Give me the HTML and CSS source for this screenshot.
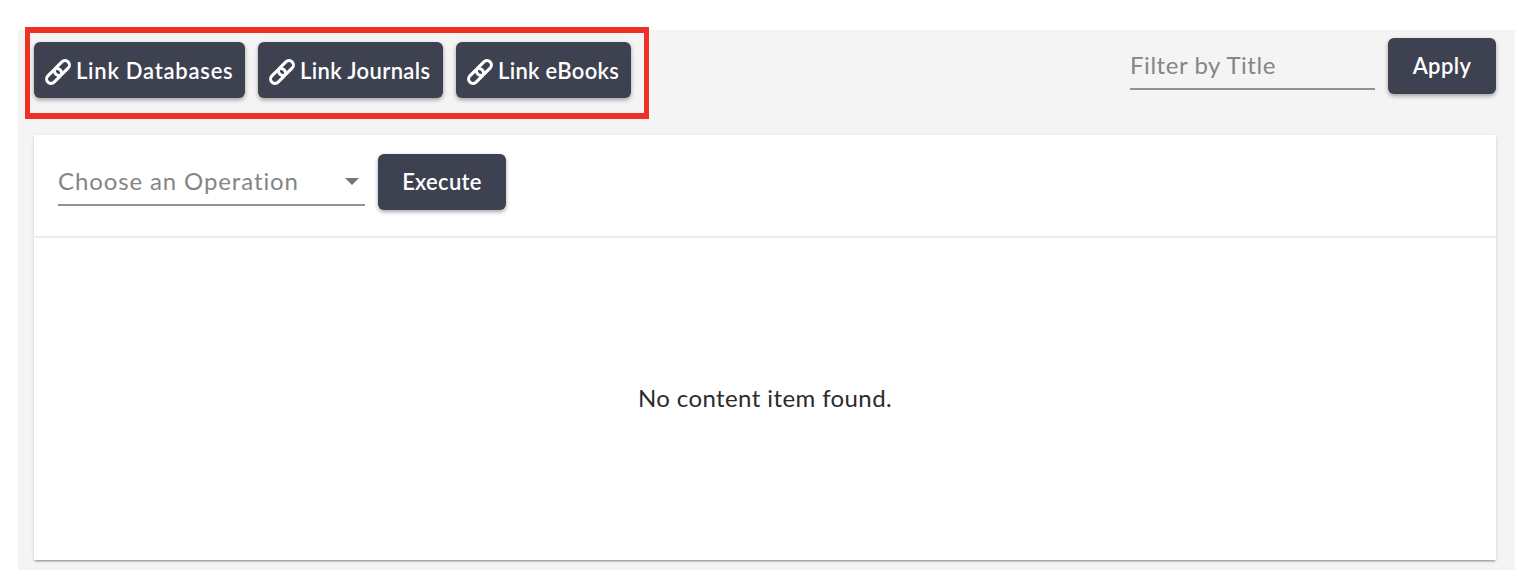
FILE: index.html
```
<!DOCTYPE html>
<html lang="en">
<head>
  <meta charset="UTF-8">
  <meta name="viewport" content="width=device-width, initial-scale=1.0">
  <title>Content items</title>
  <link rel="stylesheet" href="styles.css">
</head>
<body>
  <svg class="sprite" aria-hidden="true">
    <symbol id="icon-link" viewBox="0 0 26 26">
      <g transform="translate(13 13) rotate(-45)" fill="none" stroke="currentColor" stroke-width="3.1">
        <rect x="-14.3" y="-4.4" width="17.4" height="8.8" rx="4.4"/>
        <rect x="-3.1" y="-4.4" width="17.4" height="8.8" rx="4.4"/>
      </g>
    </symbol>
  </svg>

  <div class="page">
    <div class="toolbar">
      <div class="link-actions">
        <button class="btn btn-databases"><svg class="icon"><use href="#icon-link"/></svg><span>Link Databases</span></button>
        <button class="btn btn-journals"><svg class="icon"><use href="#icon-link"/></svg><span>Link Journals</span></button>
        <button class="btn btn-ebooks"><svg class="icon"><use href="#icon-link"/></svg><span>Link eBooks</span></button>
      </div>
      <div class="filter">
        <input class="field filter-input" type="text" placeholder="Filter by Title">
        <button class="btn btn-apply">Apply</button>
      </div>
    </div>

    <div class="card">
      <div class="card-header">
        <div class="field select">
          <span>Choose an Operation</span>
          <span class="caret"></span>
        </div>
        <button class="btn btn-execute">Execute</button>
      </div>
      <div class="empty">No content item found.</div>
    </div>
  </div>
</body>
</html>
```
FILE: styles.css
```
:root {
  --page-bg: #f4f4f4;
  --dark: #3d4150;
  --muted: #858585;
  --highlight: #ee3124;
}

* {
  box-sizing: border-box;
}

body {
  margin: 0;
  padding: 30px 23px 18px 18px;
  background-color: #fff;
  font-family: Lato, "Open Sans", sans-serif;
  font-size: 24px;
  color: #2b2b2b;
}

.sprite {
  display: none;
}

.page {
  height: 540px;
  background-color: var(--page-bg);
}

.toolbar {
  display: flex;
  justify-content: space-between;
  align-items: flex-start;
  height: 105px;
  padding: 0 19px 0 7px;
}

/* the outline sticks out a little above the page */
.link-actions {
  display: flex;
  gap: 13px;
  width: 624px;
  height: 92px;
  margin-top: -3px;
  padding: 9px 4px;
  border: 6px solid var(--highlight);
  border-width: 6px 5px;
}

.btn {
  display: flex;
  align-items: center;
  justify-content: center;
  flex-shrink: 0;
  height: 56px;
  padding: 0;
  border: none;
  border-radius: 6px;
  background-color: var(--dark);
  color: #fff;
  font-family: inherit;
  font-size: 22px;
  font-weight: 600;
  white-space: nowrap;
  cursor: pointer;
  box-shadow: 0 2px 4px rgba(0, 0, 0, 0.35);
}

.link-actions .btn {
  justify-content: flex-start;
  padding-left: 11px;
}

.icon {
  flex-shrink: 0;
  width: 26px;
  height: 26px;
  margin: 4px 5px 0 0;
}

.btn-databases {
  width: 211px;
  letter-spacing: 0.75px;
}

.btn-journals {
  width: 185px;
  letter-spacing: 0.35px;
}

.btn-ebooks {
  width: 175px;
  letter-spacing: 0.3px;
}

.btn-apply {
  width: 108px;
  padding-bottom: 2px;
  letter-spacing: 0.4px;
}

.btn-execute {
  width: 128px;
  padding-bottom: 1px;
  letter-spacing: 0.3px;
}

.filter {
  display: flex;
  gap: 13px;
  padding-top: 8px;
}

.field {
  height: 52px;
  padding: 0;
  border: none;
  border-bottom: 2px solid #929292;
  background: transparent;
  color: var(--muted);
  font-family: inherit;
  font-size: 24px;
}

.filter-input {
  width: 245px;
  padding-top: 2px;
  letter-spacing: 0.55px;
}

.filter-input::placeholder {
  color: var(--muted);
  opacity: 1;
}

.card {
  height: 425px;
  margin: 0 19px 0 16px;
  background-color: #fff;
  box-shadow: 0 2px 2px -1px rgba(0, 0, 0, 0.4), 0 1px 4px rgba(0, 0, 0, 0.1);
}

.card-header {
  display: flex;
  gap: 13px;
  height: 103px;
  padding: 19px 24px 0;
  border-bottom: 2px solid #ececec;
}

.select {
  display: flex;
  align-items: center;
  justify-content: space-between;
  width: 307px;
  padding: 2px 6px 0 0;
  letter-spacing: 0.88px;
}

.caret {
  margin-top: 2px;
  border: 7px solid transparent;
  border-top-color: #757575;
  border-bottom: none;
}

.empty {
  display: flex;
  align-items: center;
  justify-content: center;
  height: 322px;
  padding-bottom: 4px;
  letter-spacing: 0.4px;
}
```
